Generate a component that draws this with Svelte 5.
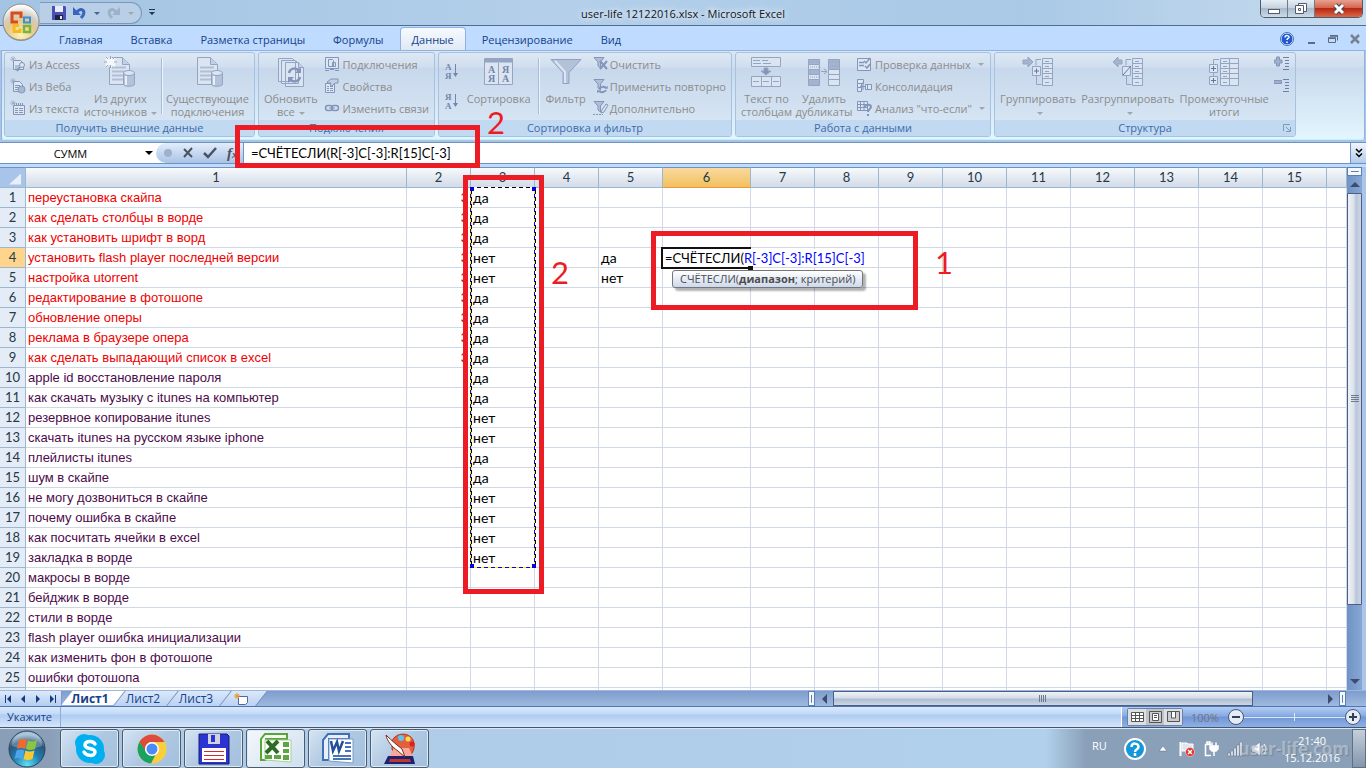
<script lang="ts">
	const menuTabs = ['Главная', 'Вставка', 'Разметка страницы', 'Формулы', 'Данные', 'Рецензирование', 'Вид'];
	let activeTab = $state('Данные');

	const queries = [
		'переустановка скайпа',
		'как сделать столбцы в ворде',
		'как установить шрифт в ворд',
		'установить flash player последней версии',
		'настройка utorrent',
		'редактирование в фотошопе',
		'обновление оперы',
		'реклама в браузере опера',
		'как сделать выпадающий список в excel',
		'apple id восстановление пароля',
		'как скачать музыку с itunes на компьютер',
		'резервное копирование itunes',
		'скачать itunes на русском языке iphone',
		'плейлисты itunes',
		'шум в скайпе',
		'не могу дозвониться в скайпе',
		'почему ошибка в скайпе',
		'как посчитать ячейки в excel',
		'закладка в ворде',
		'макросы в ворде',
		'бейджик в ворде',
		'стили в ворде',
		'flash player ошибка инициализации',
		'как изменить фон в фотошопе',
		'ошибки фотошопа'
	];

	const answers = [
		'да', 'да', 'да', 'нет', 'нет', 'да', 'да', 'да', 'да', 'да',
		'да', 'нет', 'нет', 'да', 'да', 'нет', 'нет', 'нет', 'нет'
	];

	const criteria: Record<number, string> = { 3: 'да', 4: 'нет' };
	const columns = Array.from({ length: 15 }, (_, i) => i + 1);
	const sheets = ['Лист1', 'Лист2', 'Лист3'];

	let activeSheet = $state('Лист1');
	let formula = $state('=СЧЁТЕСЛИ(R[-3]C[-3]:R[15]C[-3]');
	let zoom = $state(50);
</script>

{#snippet smallIcon(name: string)}
	<svg class="ico" viewBox="0 0 16 16" width="16" height="16" fill="#dde6f3" stroke="#8395b8">
		{#if name === 'access'}
			<path d="M3.5 4.5h7l3 3v6h-10z" />
			<path d="M0 3h6M3 0v6M1 1l4 4M5 1 1 5" stroke="#9aabc8" stroke-width=".7" />
			<path d="M5 10h4M5 12h3" />
			<circle cx="12" cy="9" r="2.5" />
			<path d="m10 11-3 4" stroke-width="2" />
		{:else if name === 'web'}
			<path d="M3.5 3.5h6l3 3v7h-9z" />
			<path d="M0 3h6M3 0v6M1 1l4 4M5 1 1 5" stroke="#9aabc8" stroke-width=".7" />
			<path d="M5 7.5h5M5 9.5h4M5 11.5h3" />
			<circle cx="11.5" cy="11.5" r="3.5" fill="#a9b8d1" />
		{:else if name === 'text'}
			<path d="M3.5 5.5h11v9h-11z" />
			<path d="M4 4.5h10" stroke-dasharray="1 1" stroke-width="3" />
			<path d="M0 3h6M3 0v6M1 1l4 4M5 1 1 5" stroke="#9aabc8" stroke-width=".7" />
			<path d="M5 8.5h3M9 8.5h4M5 10.5h3M9 10.5h4M5 12.5h3M9 12.5h4" />
		{:else if name === 'links'}
			<path d="M1.5 1.5h13v11h-13z" />
			<path d="M4.5 3.5h4l1 1v6h-5zM8.5 6.5h3v4h-3z" />
			<path d="M1 14.5h4M11 14.5h4M6 13.5h4" />
		{:else if name === 'props'}
			<path d="M1.5 5.5h9v9h-9z" />
			<path d="M3 8.5h2M6 8.5h3M3 10.5h2M6 10.5h3M3 12.5h2M6 12.5h3" />
			<path d="m3 4 4-3h7v4h-3l-3 3-2-1 1-2H4z" fill="#c2cee1" />
		{:else if name === 'chain'}
			<rect x="1.5" y="5.5" width="7" height="5" rx="2.5" fill="none" stroke-width="1.5" />
			<rect x="7.5" y="5.5" width="7" height="5" rx="2.5" fill="none" stroke-width="1.5" />
			<path d="M5 8h6" />
		{:else if name === 'clear' || name === 'reapply' || name === 'advanced'}
			<path d="M1 1.5h10L7.5 6v6L5 10V6z" fill="#b1bfd6" />
			{#if name === 'clear'}
				<path d="m7 5 7 8M14 5l-7 8" stroke-width="2" stroke="#8395b8" />
			{:else if name === 'reapply'}
				<path d="M6 11a4 3 0 0 1 7-1M13 12a4 3 0 0 1-7 1" fill="none" stroke-width="2" />
				<path d="m11 10 3.5 1L15 8zM8 13l-4-1v3z" fill="#8395b8" stroke="none" />
			{:else}
				<path d="m8 13 1-3 4-6 2 1-4 7z" />
				<path d="M0 14.5h10" stroke-dasharray="2 1" />
			{/if}
		{:else if name === 'validate'}
			<path d="M1.5 2.5h13v12h-13z" />
			<path d="M3 6.5h5M3 9.5h5" stroke-width="1.5" />
			<path d="m8 5 2 2 4-5M9 10l2 2 3-4" fill="none" stroke-width="1.5" />
		{:else if name === 'merge'}
			<path d="M1.5 1.5h6v4h-6zM1.5 5.5h4v8h-4zM9.5 6.5h6v5h-6z" />
			<path d="M2 9.5h3M7 4v8M4 8.5h6M11.5 7v4" />
		{:else if name === 'whatif'}
			<path d="M1.5 1.5h10v9h-10zM1 4.5h10M1 7.5h10M4.5 1v9M8 1v9" />
			<path d="M9 7c0-3 6-3 6 0 0 2-3 2-3 5M12 14v2" fill="none" stroke-width="2" />
		{:else if name === 'show' || name === 'hide'}
			<path d="M9 1.5h6M11 4.5h4M11 7.5h4M11 10.5h4M9 13.5h6" stroke="#6c7fa5" />
			<path d={name === 'show' ? 'M0 4h2.5V1h3v3H8v3H5.5v3h-3V7H0z' : 'M0 2.5h7.5v3H0z'} fill="#9fb0ca" />
		{/if}
	</svg>
{/snippet}

{#snippet bigIcon(name: string)}
	<svg class="ico" viewBox="0 0 32 32" width="32" height="32" fill="#dbe4f1" stroke="#94a5c4">
		{#if name === 'sources' || name === 'existing'}
			<path d="M5.5 1.5h13l7 7v20h-20z" />
			<path d="M18.5 1.5v7h7" fill="#c3cfe2" />
			<path d="M8 11.5h14M8 15.5h14M8 19.5h11M8 23.5h11" stroke="#b1bfd6" stroke-width="2" />
			<path d="M19.5 17v11c0 3 11 3 11 0V17z" fill="#b4c2d9" />
			<path d="M22 20v9" stroke="#e9eff7" stroke-width="2" />
			<ellipse cx="25" cy="17" rx="5.5" ry="2.5" />
			{#if name === 'sources'}
				<path d="M1 6h11M6.500 1v10M2 2l9 8M11 2l-9 8" stroke="#f5f8fc" stroke-width="2.500" />
				<path d="M0 6h3M10 6h3M6.500 0v3M2 1l2 2M11 1 9 3M2 11l2-2M6.500 9v3" />
			{/if}
		{:else if name === 'refresh'}
			<path d="M3.5 2.5h14l3 3v20h-17zM6.5 4.500h14l3 3v20h-17zM10.500 6.500h13l5 5v19h-18z" />
			<path d="M23.500 6.500v5h5" fill="#c3cfe2" />
			<path d="M14 17c1-5 7-6 10-2M25 21c-1 5-7 6-10 2" fill="none" stroke="#8395b8" stroke-width="2.500" />
			<path d="M20 17h6v-6zM19 21h-6v6z" fill="#8395b8" stroke="none" />
		{:else if name === 'sort'}
			<path d="M1.5 2.500h28v26h-28z" />
			<path d="M2 4.500h27" stroke-width="4" />
			<path d="M15.500 7v21" />
			<g class="az big-az" stroke="none" fill="#7385ab">
				<text x="5" y="17">А</text><text x="5" y="26">Я</text>
				<text x="19" y="17">Я</text><text x="19" y="26">А</text>
			</g>
		{:else if name === 'filter'}
			<path d="M1 3.500h30l-12 13v11h-6v-11z" fill="#b4c2d9" stroke="#8fa2c3" />
			<path d="m5 5 10 11v11" fill="none" stroke="#dce5f2" stroke-width="2" />
		{:else if name === 'columns'}
			<path d="M1.5 1.5h29v9h-29zM1.500 20.500h29v10h-29zM11.500 20v10M21.500 20v10" />
			<path d="M3 4.500h7M12 4.500h6M3 7.500h8M13 7.500h8M3 25.500h6M13 25.500h6M23 25.500h6" />
			<path d="M14 12h4v3h3l-5 4-5-4h3z" fill="#8395b8" />
		{:else if name === 'dupes'}
			<path d="M.5 3.500h11v5H.500zM.500 13.500h11v5H.500zM.500 23.500h11v6H.500zM20.500 3.500h11v10h-11z" fill="#a4b4ce" />
			<path d="M.5 8.500h11v5H.500zM.500 18.500h11v5H.500zM20.500 13.500h11v5h-11zM20.500 18.500h11v11h-11zM20 23.500h11" />
			<path d="M2 11h9M2 21h9M2 6h9M22 6h9M22 10h9" stroke-dasharray="1 1" />
			<path d="M13 15.500h5M16 13l3 2.500-3 2.500" fill="none" />
		{:else if name === 'group' || name === 'ungroup'}
			<path d="M20.5 2.500h10v27h-10zM20 7.500h10M20 12.500h10M20 17.500h10M20 22.500h10M23 5.500h4M23 10.500h4M23 15.500h4M23 20.500h4M23 26.500h4" />
			<path d="M19 3.500h-5v6M14.500 20v8.500h5" fill="none" />
			<path d="M10.5 10.500h8v9h-8z" />
			{#if name === 'group'}
				<path d="M12 15h5M14.500 12.500v5" stroke="#62759c" />
				<path d="M1 4h5V1l5 5-5 5V8H1z" fill="#a4b4ce" />
			{:else}
				<path d="m11 19 8-9" stroke="#62759c" />
				<path d="M10 4H6V1L1 6l5 5V8h4z" fill="#a4b4ce" />
			{/if}
		{:else if name === 'subtotal'}
			<path d="M12.500 2.500h18v27h-18zM21.500 2v27M12 7.500h18M12 12.500h18M12 17.500h18M12 22.500h18M15 5.500h4M15 10.500h4M15 15.500h4M15 20.500h4M15 26.500h4" />
			<path d="M11 3.500H5.500v23" fill="none" />
			<path d="M1.500 8.500h8v8h-8zM1.500 20.500h8v8h-8z" />
			<path d="M3 12.500h5M5.500 10v5M3 24.500h5M5.500 22v5" stroke="#62759c" />
		{/if}
	</svg>
{/snippet}

{#snippet small(icon: string, label: string, arrow = false)}
	<button class="small">
		{@render smallIcon(icon)}
		<span>{label}</span>
		{#if arrow}<i class="caret"></i>{/if}
	</button>
{/snippet}

{#snippet big(icon: string, first: string, second = '', arrow = false)}
	<button class="big">
		{@render bigIcon(icon)}
		<span>{first}</span>
		<span>{second}{#if arrow}<i class="caret"></i>{/if}</span>
	</button>
{/snippet}

<div class="screen">
	<header class="titlebar">
		<div class="title-left">
			<div class="quick">
				<button aria-label="Сохранить">
					<svg width="14" height="14" viewBox="0 0 14 14"><path d="M0 0h13l1 1v13H0z" fill="#4a4fb5" /><path d="M3 0h8v6H3z" fill="#e7edfa" /><path d="M3 9h8v5H3z" fill="#20233f" /><path d="M8 10h2v3H8z" fill="#e7edfa" /></svg>
				</button>
				<button aria-label="Отменить">
					<svg width="14" height="14" viewBox="0 0 14 14"><path d="M4 6c5-6 10 0 4 6" fill="none" stroke="#3765c0" stroke-width="3" /><path d="M0 1v8h8z" fill="#3765c0" /></svg>
				</button>
				<i class="caret dark"></i>
				<button aria-label="Вернуть">
					<svg width="14" height="14" viewBox="0 0 14 14"><path d="M9 6C4 0-1 6 5 12" fill="none" stroke="#9eb1ca" stroke-width="3" /><path d="M13 1v8H5z" fill="#9eb1ca" /></svg>
				</button>
				<i class="caret"></i>
			</div>
			<button class="more" aria-label="Настройка панели">
				<svg width="6" height="6" viewBox="0 0 6 6"><path d="M0 0h6v1H0zM0 3h6L3 6z" fill="#1d3556" /></svg>
			</button>
		</div>
		<h1>user-life 12122016.xlsx - Microsoft Excel</h1>
		<div class="window-buttons">
			<button aria-label="Свернуть"><svg width="14" height="12" viewBox="0 0 14 12"><rect x="1.5" y="6.5" width="11" height="4" fill="#fff" stroke="#545b6d" /></svg></button>
			<button aria-label="Восстановить"><svg width="14" height="12" viewBox="0 0 14 12"><path d="M4.5.5h8v8h-8z" fill="#fff" stroke="#545b6d" /><path d="M1.5 2.5h8v8h-8zM4.5 5.5h2v2h-2z" fill="#fff" stroke="#545b6d" /></svg></button>
			<button class="close" aria-label="Закрыть"><svg width="14" height="12" viewBox="0 0 14 12"><path d="m3 2 8 8M11 2l-8 8" stroke="#4b4652" stroke-width="5" /><path d="m3 2 8 8M11 2l-8 8" stroke="#fff" stroke-width="3" /></svg></button>
		</div>
	</header>

	<button class="office" aria-label="Office">
		<svg width="40" height="40" viewBox="0 0 40 40">
			<defs>
				<radialGradient id="orb" cx="50%" cy="85%" r="80%">
					<stop offset="0" stop-color="#fff3b8" />
					<stop offset=".5" stop-color="#e3c88c" />
					<stop offset=".7" stop-color="#d1ccc4" />
					<stop offset="1" stop-color="#fff" />
				</radialGradient>
			</defs>
			<circle cx="20" cy="21" r="18" fill="#6f6a60" opacity=".6" />
			<circle cx="20" cy="20" r="18" fill="url(#orb)" stroke="#918b7e" />
			<g fill="none" stroke-width="3">
				<path d="M17 20h-6v-9h9v5" stroke="#dc4a18" />
				<path d="M23 15.5h6v5h-6z" stroke="#3a8fd8" stroke-width="2" />
				<path d="M18 23.5h-5v6h6v-3" stroke="#f5b921" />
				<path d="M23 24h6v6h-6z" stroke="#7bb33c" stroke-width="2.5" />
			</g>
		</svg>
	</button>

	<nav class="menu">
		{#each menuTabs as tab}
			<button class:active={tab === activeTab} onclick={() => (activeTab = tab)}>{tab}</button>
		{/each}
		<div class="doc-buttons">
			<button aria-label="Справка">
				<svg width="14" height="14" viewBox="0 0 14 14"><circle cx="7" cy="7" r="6" fill="#2158d0" stroke="#f0f5ff" /><circle cx="7" cy="7" r="6.5" fill="none" stroke="#4973b8" /><path d="M5 5.5c0-3 4.500-2 4 0-.5 1-2 1-2 2.500M7 9.500v1.500" fill="none" stroke="#fff" stroke-width="1.5" /></svg>
			</button>
			<button aria-label="Свернуть книгу"><svg width="10" height="10" viewBox="0 0 10 10"><path d="M2 9h7" stroke="#5f6b80" stroke-width="2" /></svg></button>
			<button aria-label="Восстановить книгу"><svg width="10" height="10" viewBox="0 0 10 10"><path d="M.5 4.5h7v4h-7zM2 1.5h7.500v5" fill="none" stroke="#5f6b80" /><path d="M0 4h8M2 2h8" stroke="#5f6b80" stroke-width="1.5" /></svg></button>
			<button aria-label="Закрыть книгу"><svg width="10" height="10" viewBox="0 0 10 10"><path d="m1 1 8 8M9 1 1 9" stroke="#77808f" stroke-width="2.5" /></svg></button>
		</div>
	</nav>

	<div class="ribbon-wrap">
		<div class="ribbon">
			<section class="group external">
				<div class="tools">
					<div class="stack">
						{@render small('access', 'Из Access')}
						{@render small('web', 'Из Веба')}
						{@render small('text', 'Из текста')}
					</div>
					{@render big('sources', 'Из других', 'источников', true)}
					<hr />
					{@render big('existing', 'Существующие', 'подключения')}
				</div>
				<h2>Получить внешние данные</h2>
			</section>
			<section class="group connections">
				<div class="tools">
					{@render big('refresh', 'Обновить', 'все', true)}
					<div class="stack">
						{@render small('links', 'Подключения')}
						{@render small('props', 'Свойства')}
						{@render small('chain', 'Изменить связи')}
					</div>
				</div>
				<h2>Подключения</h2>
			</section>
			<section class="group sorting">
				<div class="tools">
					<div class="stack az-buttons">
						{#each ['АЯ', 'ЯА'] as pair}
							<button aria-label={pair === 'АЯ' ? 'По возрастанию' : 'По убыванию'}>
								<svg class="az" width="16" height="18" viewBox="0 0 16 18" fill="#7385ab">
									<text x="1" y="8">{pair[0]}</text>
									<text x="1" y="17">{pair[1]}</text>
									<path d="M11 2h1v9h2l-2.500 4L9 11h2z" />
								</svg>
							</button>
						{/each}
					</div>
					{@render big('sort', 'Сортировка')}
					<hr />
					{@render big('filter', 'Фильтр')}
					<div class="stack">
						{@render small('clear', 'Очистить')}
						{@render small('reapply', 'Применить повторно')}
						{@render small('advanced', 'Дополнительно')}
					</div>
				</div>
				<h2>Сортировка и фильтр</h2>
			</section>
			<section class="group data-tools">
				<div class="tools">
					{@render big('columns', 'Текст по', 'столбцам')}
					{@render big('dupes', 'Удалить', 'дубликаты')}
					<div class="stack">
						{@render small('validate', 'Проверка данных', true)}
						{@render small('merge', 'Консолидация')}
						{@render small('whatif', 'Анализ "что-если"', true)}
					</div>
				</div>
				<h2>Работа с данными</h2>
			</section>
			<section class="group outline">
				<div class="tools">
					{@render big('group', 'Группировать', '', true)}
					{@render big('ungroup', 'Разгруппировать', '', true)}
					{@render big('subtotal', 'Промежуточные', 'итоги')}
					<div class="stack">
						<button class="small" aria-label="Отобразить детали">{@render smallIcon('show')}</button>
						<button class="small" aria-label="Скрыть детали">{@render smallIcon('hide')}</button>
					</div>
				</div>
				<h2>Структура</h2>
				<svg class="launcher" width="8" height="8" viewBox="0 0 8 8"><path d="M.5 7V.5H7M3 3l4 4M7.5 3v4.500H3" fill="none" stroke="#7f98bf" /></svg>
			</section>
		</div>
	</div>

	<div class="formula-bar">
		<div class="name-box">
			<input aria-label="Имя" value="СУММ" />
			<i class="caret black"></i>
		</div>
		<div class="fx">
			<i class="dot"></i>
			<button aria-label="Отмена"><svg width="12" height="12" viewBox="0 0 12 12"><path d="m2 2 8 8M10 1 2 10" stroke="#4b5361" stroke-width="2" /></svg></button>
			<button aria-label="Ввод"><svg width="14" height="12" viewBox="0 0 14 12"><path d="m1 6 4 4 8-9" fill="none" stroke="#4b5361" stroke-width="2.5" /></svg></button>
			<button class="fn" aria-label="Вставить функцию">f<small>x</small></button>
		</div>
		<input class="formula" aria-label="Строка формул" bind:value={formula} />
		<button class="expand" aria-label="Развернуть"><svg width="8" height="10" viewBox="0 0 8 10"><path d="m1 1 3 3 3-3M1 5.5l3 3 3-3" fill="none" stroke="#000" stroke-width="1.5" /></svg></button>
	</div>

	<div class="sheet-area">
		<div class="sheet">
			<table>
				<colgroup>
					<col class="c-head" />
					<col class="c-text" />
					{#each columns.slice(1) as n}
						<col class={n === 6 ? 'c-wide' : 'c-std'} />
					{/each}
					<col />
				</colgroup>
				<thead>
					<tr>
						<th class="corner"><i></i></th>
						{#each columns as n}
							<th class:current={n === 6}>{n}</th>
						{/each}
						<th></th>
					</tr>
				</thead>
				<tbody>
					{#each queries as query, r}
						<tr>
							<th class:current={r === 3}>{r + 1}</th>
							<td class="query" class:hot={r < 9}>{query}</td>
							<td class="count">{r < 9 ? '3' : ''}</td>
							<td class="answer">{answers[r] ?? ''}</td>
							<td></td>
							<td>{criteria[r] ?? ''}</td>
							<td>
								{#if r === 3}
									<div class="editor"><span class="edit-text">=СЧЁТЕСЛИ(<b>R[-3]C[-3]:R[15]C[-3]</b></span></div>
								{/if}
							</td>
							{#each columns.slice(6) as _}
								<td></td>
							{/each}
							<td></td>
						</tr>
					{/each}
					<tr class="rest">
						<th></th>
						{#each columns as _}<td></td>{/each}
						<td></td>
					</tr>
				</tbody>
			</table>
			<div class="marquee"><i></i><i></i><i></i><i></i></div>
			<div class="hint">СЧЁТЕСЛИ(<b>диапазон</b>; критерий)</div>
		</div>
		<div class="vscroll">
			<i class="split"></i>
			<button aria-label="Вверх"><i class="up"></i></button>
			<div class="vthumb"><i class="grip"></i></div>
			<div class="vtrack"></div>
			<button aria-label="Вниз"><i class="down"></i></button>
		</div>
	</div>

	<div class="sheet-bar">
		<div class="sheet-nav">
			<button aria-label="Первый лист"><svg width="8" height="8" viewBox="0 0 8 8"><path d="M1 0h1v8H1zM7 0v8L3 4z" /></svg></button>
			<button aria-label="Предыдущий лист"><svg width="8" height="8" viewBox="0 0 8 8"><path d="M6 0v8L2 4z" /></svg></button>
			<button aria-label="Следующий лист"><svg width="8" height="8" viewBox="0 0 8 8"><path d="M2 0v8l4-4z" /></svg></button>
			<button aria-label="Последний лист"><svg width="8" height="8" viewBox="0 0 8 8"><path d="M6 0h1v8H6zM1 0v8l4-4z" /></svg></button>
		</div>
		<div class="sheet-tabs">
			{#each sheets as sheet}
				<button class:active={sheet === activeSheet} onclick={() => (activeSheet = sheet)}>{sheet}</button>
			{/each}
			<button class="new" aria-label="Вставить лист">
				<svg width="14" height="12" viewBox="0 0 14 12"><path d="M4.5 3.5h9v6l-2 2h-7z" fill="#fff" stroke="#51699a" /><path d="M0 3h6M3 0v6M1 1l4 4M5 1 1 5" stroke="#e89b1c" /></svg>
			</button>
		</div>
		<div class="hscroll">
			<i class="split"></i>
			<button aria-label="Влево"><i class="left"></i></button>
			<div class="hthumb"><i class="grip"></i></div>
			<div class="htrack"></div>
			<button aria-label="Вправо"><i class="right"></i></button>
			<i class="split"></i>
		</div>
	</div>

	<footer class="status">
		<span class="mode">Укажите</span>
		<div class="view">
			<div class="view-buttons">
				<button aria-label="Обычный"><svg width="13" height="10" viewBox="0 0 13 10"><path d="M.5.5h12v9H.5zM0 3.5h13M0 6.5h13M4.5 0v10M8.5 0v10" fill="#fff" stroke="#555" /></svg></button>
				<button class="on" aria-label="Разметка страницы"><svg width="13" height="12" viewBox="0 0 13 12"><path d="M.5.5h12v11H.5z" fill="#c9cdd2" stroke="#555" /><path d="M3.5 2.5h6v7h-6zM5 4.5h3M5 6.5h3" fill="#fff" stroke="#555" /></svg></button>
				<button aria-label="Страничный"><svg width="13" height="12" viewBox="0 0 13 12"><path d="M.5.5h12v10H.5z" fill="#c9cdd2" stroke="#555" /><path d="M4.5 1v6h4V1" fill="#fff" stroke="#555" /></svg></button>
			</div>
			<span class="percent">100%</span>
			<button class="round" aria-label="Мельче"><svg width="16" height="16" viewBox="0 0 16 16"><circle cx="8" cy="8" r="7.5" fill="#e5ebf4" stroke="#46597c" /><path d="M4 8h8" stroke="#333f55" stroke-width="2" /></svg></button>
			<input type="range" aria-label="Масштаб" bind:value={zoom} />
			<button class="round" aria-label="Крупнее"><svg width="16" height="16" viewBox="0 0 16 16"><circle cx="8" cy="8" r="7.5" fill="#e5ebf4" stroke="#46597c" /><path d="M4 8h8M8 4v8" stroke="#333f55" stroke-width="2" /></svg></button>
		</div>
	</footer>

	<div class="taskbar">
		<button class="start" aria-label="Пуск">
			<svg width="38" height="38" viewBox="0 0 38 38">
				<defs>
					<radialGradient id="start" cx="50%" cy="95%" r="85%">
						<stop offset="0" stop-color="#5fe2f5" />
						<stop offset=".45" stop-color="#1f7fb4" />
						<stop offset=".8" stop-color="#2b5679" />
						<stop offset="1" stop-color="#8fb3cb" />
					</radialGradient>
				</defs>
				<circle cx="19" cy="19" r="18" fill="url(#start)" stroke="#29475f" />
				<path d="M4 16a15 14 0 0 1 30 0q-15 5-30 0" fill="#fff" opacity=".25" />
				<path d="M11 10q4-2 8 0l-2 9q-4-2-8 0z" fill="#ee6a2f" />
				<path d="M20 10.500q4 2 9 0l-2 8.500q-5 2-9 0z" fill="#8cc63e" />
				<path d="M8.500 20.500q4-2 8 0l-2 8.500q-4-2-8 0z" fill="#4ba5e8" />
				<path d="M17.500 20.500q4 2 9 0l-2 8.500q-5 2-9 0z" fill="#fbc92f" />
			</svg>
		</button>
		<button class="task" aria-label="Skype">
			<svg width="32" height="32" viewBox="0 0 32 32"><circle cx="10" cy="10" r="9" fill="#00aff0" /><circle cx="22" cy="22" r="9" fill="#00aff0" /><circle cx="16" cy="16" r="14" fill="#00aff0" /><path d="M21 11c-2-4-10-3-10 1 0 5 10 2 10 7 0 5-9 4-11 0" fill="none" stroke="#fff" stroke-width="3.5" stroke-linecap="round" /></svg>
		</button>
		<button class="task" aria-label="Chrome">
			<svg width="32" height="32" viewBox="0 0 32 32"><circle cx="16" cy="16" r="14.5" fill="#fbcf3a" /><path d="M3.5 8.700A14.500 14.500 0 0 1 28.600 9H16a7 7 0 0 0-6.500 9.500z" fill="#dd4b3e" /><path d="M3.500 8.700A14.500 14.500 0 0 0 15 30.500l6-11.500a7 7 0 0 1-11-.5z" fill="#1aa260" /><circle cx="16" cy="16" r="7" fill="#fff" /><circle cx="16" cy="16" r="5.5" fill="#4c8bf5" /></svg>
		</button>
		<button class="task" aria-label="Total Commander">
			<svg width="32" height="32" viewBox="0 0 32 32"><path d="M1 1h28l2 2v28H1z" fill="#2b33d0" stroke="#1a1d78" /><path d="M10 1h12v10H10z" fill="#cfd3df" /><path d="M13 2h4v7h-4z" fill="#2b33d0" /><path d="M4 15h24v14H4z" fill="#fff" /><path d="M6 18.500h20M6 22.500h20M6 26.500h20" stroke="#d9262c" /></svg>
		</button>
		<button class="task lit" aria-label="Excel">
			<svg width="32" height="32" viewBox="0 0 32 32"><path d="M5 1h22v5H6v21H1V6z" fill="#f6fbf1" stroke="#58a63a" stroke-width="2" /><path d="M5 7h26v22l-26-2z" fill="#fff" stroke="#a9cf97" /><path d="M23 9h6v5h-6zM23 16h6v4h-6zM5 22h7v4H5zM14 22h7v4h-7zM23 22h6v5h-6z" fill="#5da645" /><path d="m7 8 11 12M18 8 6 20" stroke="#2c6d25" stroke-width="4" /></svg>
		</button>
		<button class="task" aria-label="Word">
			<svg width="32" height="32" viewBox="0 0 32 32"><path d="M6 1h21v5H7v21H1V7z" fill="#e6effa" stroke="#3f6fb5" stroke-width="2" /><path d="M7 6h24v24L7 28z" fill="#fff" stroke="#7d9cc9" /><path d="M23 10h6M23 14h6M23 18h6M11 23h18M11 26h18" stroke="#4674b8" stroke-width="2" /><path d="m9 8 2 10 4-9 2 9 4-10" fill="none" stroke="#244e97" stroke-width="2.500" /></svg>
		</button>
		<button class="task" aria-label="Paint">
			<svg width="32" height="32" viewBox="0 0 32 32"><path d="M8 8c4-9 17-9 21-1 3 7 0 14-5 17H11l-3-8z" fill="#e2603f" stroke="#b03722" /><circle cx="17" cy="5" r="3" fill="#5bc6ef" /><circle cx="24" cy="6" r="2.5" fill="#ffe249" /><circle cx="28" cy="11" r="2.5" fill="#e21d23" /><path d="m5 24 5-9h15l4 9z" fill="#f9a79b" /><path d="M4 23h25l2 8H0z" fill="#1b2370" /><path d="M6 26h20l1 3H5z" fill="#c2352f" /><path d="M2 2c1 6 6 12 12 16l7 6-3-8C13 12 8 8 2 2z" fill="#fff" stroke="#7b2a1c" /></svg>
		</button>

		<div class="tray">
			<span class="lang">RU</span>
			<svg class="help" width="22" height="22" viewBox="0 0 22 22"><circle cx="11" cy="11" r="10" fill="#1396dc" stroke="#fff" stroke-width="2" /><path d="M7.500 9c0-5 7-4 7 0 0 2.500-3.500 2-3.500 5M11 15v3" fill="none" stroke="#fff" stroke-width="2.5" /></svg>
			<svg class="arrow" width="8" height="6" viewBox="0 0 8 6"><path d="m0 5 4-5 4 5z" fill="#fff" stroke="#5a6b80" stroke-width=".5" /></svg>
			<svg width="16" height="16" viewBox="0 0 16 16"><path d="M1.500 1v14" stroke="#fff" stroke-width="2" /><path d="M3 2h5l1 1h5v7H3z" fill="#dfe6ee" stroke="#fff" /><circle cx="11" cy="11" r="4.5" fill="#e0322c" stroke="#fff" stroke-width=".5" /><path d="m9 9 4 4M13 9l-4 4" stroke="#fff" stroke-width="1.5" /></svg>
			<svg width="16" height="16" viewBox="0 0 16 16"><path d="M8 14.500H2.500v-11H8M4 1h3v2H4z" fill="none" stroke="#fff" stroke-width="1.5" /><path d="M7 5h8v3l-2 2H9L7 8zM9 1.500V5M13 1.500V5M11 10v5" fill="#fff" stroke="#fff" stroke-width="1.5" /></svg>
			<svg width="16" height="16" viewBox="0 0 16 16"><path d="M1 12h2v3H1zM4 10h2v5H4zM7 7h2v8H7zM10 4h2v11h-2zM13 1h2v14h-2z" fill="#fff" stroke="#5a6b80" stroke-width=".5" /></svg>
			<svg width="16" height="16" viewBox="0 0 16 16"><path d="M1 5h3l5-4v14l-5-4H1z" fill="#fff" stroke="#5a6b80" stroke-width=".5" /><path d="M11 5q2 3 0 6M13 3q4 5 0 10" fill="none" stroke="#fff" /></svg>
			<div class="clock">
				<span class="watermark">user-life.com</span>
				<time>21:40</time>
				<time>15.12.2016</time>
			</div>
		</div>
		<button class="peek" aria-label="Показать рабочий стол"></button>
	</div>

	<div class="mark mark-formula"></div>
	<div class="mark mark-range"></div>
	<div class="mark mark-cell"></div>
	<span class="num num-formula">2</span>
	<span class="num num-range">2</span>
	<span class="num num-cell">1</span>
</div>

<style>
	:global(body) {
		margin: 0;
		overflow: hidden;
	}

	.screen {
		--ui: 'Open Sans', 'Noto Sans', sans-serif;
		--red: #ed1c24;
		position: relative;
		display: flex;
		flex-direction: column;
		height: 100vh;
		overflow: hidden;
		background: #bfdbff;
		font-family: var(--ui);
		font-size: 11px;
		color: #15428b;
	}

	.screen * {
		box-sizing: border-box;
	}

	button,
	input {
		font: inherit;
		color: inherit;
		padding: 0;
		margin: 0;
		border: 0;
		background: none;
	}

	svg {
		display: block;
		flex-shrink: 0;
	}

	h1,
	h2,
	hr {
		margin: 0;
		font-weight: normal;
	}

	.caret {
		display: inline-block;
		border: 3px solid transparent;
		border-top-color: #a0a6b0;
		border-bottom: 0;
		margin-left: 4px;
		vertical-align: middle;
	}

	.caret.dark { border-top-color: #44659a; }
	.caret.black { border: 4px solid transparent; border-top-color: #000; border-bottom: 0; }

	/* title bar */
	.titlebar {
		display: grid;
		grid-template-columns: 1fr auto 1fr;
		align-items: start;
		height: 26px;
		flex-shrink: 0;
		border-bottom: 1px solid #4f6d8f;
		background: linear-gradient(90deg, #a2c4e2, #b3cfea 40%, #a9c9e6 75%, #c8dcef);
	}

	.title-left {
		display: flex;
		padding-left: 40px;
	}

	.quick {
		display: flex;
		align-items: center;
		gap: 7px;
		width: 102px;
		height: 22px;
		margin-top: 2px;
		padding-left: 12px;
		border: 1px solid #7e97b6;
		border-left: 0;
		border-radius: 0 11px 11px 0;
		background: #b9cfe8;
	}

	.quick .caret { margin: 0; }

	.more {
		display: flex;
		align-items: center;
		justify-content: center;
		width: 20px;
		height: 24px;
	}

	h1 {
		font-size: 11px;
		line-height: 27px;
		color: #10151c;
		text-shadow: 0 0 6px #fff, 0 0 10px #fff;
	}

	.window-buttons {
		display: flex;
		justify-self: end;
		height: 18px;
		margin-right: 3px;
		border: 1px solid #4e5b6c;
		border-top: 0;
		border-radius: 0 0 5px 5px;
		overflow: hidden;
	}

	.window-buttons button {
		display: flex;
		justify-content: center;
		align-items: center;
		width: 27px;
		border-right: 1px solid #6e7c8e;
		background: linear-gradient(#e6eef6, #c3d0de 50%, #a9bacd 50%, #cbdbe9);
	}

	.window-buttons .close {
		width: 47px;
		border: 0;
		background: linear-gradient(#e9a18f, #d36650 45%, #b8270e 50%, #d9694c);
	}

	.office {
		position: absolute;
		top: 2px;
		left: 1px;
		z-index: 2;
	}

	/* menu */
	.menu {
		display: flex;
		height: 24px;
		flex-shrink: 0;
		padding: 1px 6px 0 45px;
		background: #bfdbff;
	}

	.menu > button {
		padding: 0 11px;
		margin: 0 2px;
		border: 1px solid transparent;
		border-bottom: 0;
		border-radius: 4px 4px 0 0;
		white-space: nowrap;
	}

	.menu > button.active {
		border-color: #8db2e3;
		background: linear-gradient(#f6faff, #dfe9f5);
	}

	.doc-buttons {
		display: flex;
		align-items: center;
		gap: 12px;
		margin-left: auto;
	}

	/* ribbon */
	.ribbon-wrap {
		height: 92px;
		flex-shrink: 0;
		padding: 0 1px 2px;
		background: #a9c4e6;
	}

	.ribbon {
		display: flex;
		gap: 3px;
		height: 90px;
		padding: 1px 2px 2px;
		border: 1px solid #8db2e3;
		border-bottom-color: #bff3fb;
		border-radius: 0 0 3px 3px;
		background: linear-gradient(#dbe6f4, #cfdded 16px, #c9d9ed 17px, #e3f5fe);
	}

	.group {
		position: relative;
		display: flex;
		flex-direction: column;
		flex-shrink: 0;
		border: 1px solid #a5c3e0;
		border-radius: 3px;
		background: linear-gradient(#dde8f4, #d1deee 14px, #c8d8ec 15px, #dae8f5);
		overflow: hidden;
	}

	.external { width: 251px; }
	.connections { width: 177px; }
	.sorting { width: 294px; }
	.data-tools { width: 256px; }
	.outline { width: 302px; }

	.tools {
		display: flex;
		flex: 1;
		min-height: 0;
		justify-content: space-between;
		padding: 0 5px;
		color: #8c8c8c;
	}

	.tools hr {
		width: 1px;
		height: 56px;
		margin-top: 5px;
		border: 0;
		background: #a6bdd9;
		box-shadow: 1px 0 #eef4fb;
	}

	.group h2 {
		height: 16px;
		flex-shrink: 0;
		font-size: 11px;
		line-height: 16px;
		text-align: center;
		color: #3e6aaa;
		background: #c1d9f1;
	}

	.stack {
		display: flex;
		flex-direction: column;
	}

	.small {
		display: flex;
		align-items: center;
		gap: 3px;
		height: 22px;
		white-space: nowrap;
	}

	.sorting .small { gap: 1px; }

	.big {
		display: flex;
		flex-direction: column;
		align-items: center;
		padding-top: 3px;
		line-height: 13px;
		white-space: nowrap;
	}

	.big svg { margin-bottom: 4px; }

	.az {
		font-family: 'Liberation Serif', serif;
		font-size: 9px;
		font-weight: bold;
	}

	.big-az { font-size: 10px; }

	.az-buttons button {
		height: 30px;
		padding-top: 6px;
	}

	.launcher {
		position: absolute;
		right: 4px;
		bottom: 4px;
	}

	/* formula bar */
	.formula-bar {
		display: flex;
		height: 22px;
		flex-shrink: 0;
		margin-bottom: 3px;
		border: 1px solid #6f93bd;
		border-width: 1px 0;
		background: #fff;
		color: #000;
	}

	.name-box {
		display: flex;
		align-items: center;
		width: 156px;
		padding-right: 3px;
	}

	.name-box input {
		flex: 1;
		min-width: 0;
		text-align: center;
	}

	.fx {
		display: flex;
		align-items: center;
		justify-content: space-between;
		width: 88px;
		padding: 0 6px 0 8px;
		border-right: 1px solid #6f93bd;
		background: linear-gradient(#e2edfb, #aac3e6);
		border-radius: 10px 0 0 10px;
	}

	.fx .dot {
		width: 8px;
		height: 8px;
		border-radius: 50%;
		background: #9fb1cb;
	}

	.fn {
		font: italic bold 15px 'Liberation Serif', serif;
		color: #4b5361;
	}

	.fn small { font-size: 10px; }

	.formula {
		flex: 1;
		min-width: 0;
		padding: 0 7px;
		font-family: Lato, var(--ui);
		font-size: 13px;
	}

	.expand {
		display: flex;
		align-items: center;
		justify-content: center;
		width: 16px;
		border-left: 1px solid #6f93bd;
		background: linear-gradient(#f0f6fd, #b2cbec);
	}

	/* sheet */
	.sheet-area {
		display: flex;
		flex: 1;
		min-height: 0;
		padding-right: 4px;
		background: #abc5ea;
	}

	.sheet {
		position: relative;
		flex: 1;
		min-width: 0;
		overflow: hidden;
		background: #fff;
	}

	table {
		width: 100%;
		table-layout: fixed;
		border-spacing: 0;
		font-family: Lato, var(--ui);
		font-size: 14px;
		color: #000;
	}

	.c-head { width: 26px; }
	.c-text { width: 381px; }
	.c-std { width: 64px; }
	.c-wide { width: 88px; }

	th,
	td {
		height: 20px;
		padding: 0 2px;
		line-height: 19px;
		text-align: left;
		white-space: nowrap;
		border-right: 1px solid #d0d7e5;
		border-bottom: 1px solid #d0d7e5;
	}

	th {
		padding: 0;
		font-size: 13px;
		font-weight: normal;
		text-align: center;
		color: #273846;
		background: #e4ecf7;
		border-color: #9eb6ce;
	}

	thead th {
		height: 21px;
		border-top: 1px solid #6f93bd;
		background: linear-gradient(#f8fbfd, #e4eaf2 50%, #d3dbe9);
	}

	thead th.current {
		background: linear-gradient(#f9d99f, #f1c15f);
		border-bottom-color: #f29536;
	}

	tbody th.current { background: #ffd58d; }

	thead th.corner { background: #a9c4e9; }

	.corner i {
		display: block;
		width: 12px;
		height: 11px;
		margin: 3px 4px 0 auto;
		background: #e8eff9;
		clip-path: polygon(100% 0, 100% 100%, 0 100%);
	}

	.query,
	.count {
		font-family: 'Liberation Sans', Arial, sans-serif;
		font-size: 13px;
		color: #4c0a4c;
	}

	.query.hot { color: #f00000; }

	.count {
		text-align: right;
		color: #7a0a0a;
	}

	.editor {
		position: relative;
		width: 90px;
		height: 22px;
		margin: -2px 0 -2px -4px;
		border: 2px solid #111;
		border-right: 0;
	}

	.editor::after {
		content: '';
		position: absolute;
		right: -2px;
		bottom: -3px;
		width: 5px;
		height: 4px;
		background: #111;
	}

	.edit-text {
		position: absolute;
		top: 0;
		left: 0;
		width: 214px;
		height: 18px;
		padding-left: 2px;
		font-size: 13px;
		background: #fff;
	}

	.edit-text b {
		font-weight: normal;
		color: #0000ff;
	}

	/* marching ants round the picked range */
	.marquee {
		position: absolute;
		top: 20px;
		left: 470px;
		width: 66px;
		height: 381px;
		background:
			repeating-linear-gradient(90deg, #000 0 4px, #fff 4px 7px) 0 0 / 100% 1px no-repeat,
			repeating-linear-gradient(90deg, #0000ff 0 4px, #ffee00 4px 7px) 0 100% / 100% 1px no-repeat,
			repeating-linear-gradient(#0000ff 0 4px, #ffee00 4px 7px) 0 0 / 1px 100% no-repeat,
			repeating-linear-gradient(#ffee00 0 3px, #000 3px 7px) 1px 0 / 1px 100% no-repeat,
			repeating-linear-gradient(#0000ff 0 4px, #ffee00 4px 7px) 64px 0 / 1px 100% no-repeat,
			repeating-linear-gradient(#ffffff 0 3px, #000 3px 7px) 65px 0 / 1px 100% no-repeat;
	}

	.marquee i {
		position: absolute;
		width: 4px;
		height: 4px;
		background: #0000e0;
	}

	.marquee i:nth-child(1) { top: 0; left: 0; }
	.marquee i:nth-child(2) { top: 0; right: 0; }
	.marquee i:nth-child(3) { bottom: 0; left: 0; }
	.marquee i:nth-child(4) { bottom: 0; right: 0; }

	.hint {
		position: absolute;
		top: 103px;
		left: 672px;
		height: 18px;
		padding: 0 7px;
		border: 1px solid #767676;
		border-radius: 3px;
		font-size: 11px;
		line-height: 15px;
		color: #4c4c4c;
		background: linear-gradient(#fff, #cdd9ee);
		box-shadow: 3px 3px 2px rgba(0, 0, 0, 0.3);
	}

	/* scroll bars */
	.vscroll {
		display: flex;
		flex-direction: column;
		width: 15px;
		background: linear-gradient(90deg, #6f93c6, #88a6d3);
	}

	.split {
		display: block;
		flex-shrink: 0;
		border: 1px solid #5b7fb3;
		background: linear-gradient(#5b7fb3, #5b7fb3) center / 60% 1px no-repeat #f4f8fd;
	}

	.vscroll .split { height: 9px; }

	.vscroll button {
		display: flex;
		align-items: center;
		justify-content: center;
		height: 17px;
	}

	.up,
	.down,
	.left,
	.right {
		display: block;
		border: 5px solid transparent;
	}

	.up { border-top: 0; border-bottom-color: #3d4c6e; }
	.down { border-bottom: 0; border-top-color: #3d4c6e; }
	.left { border-left: 0; border-right-color: #3d4c6e; }
	.right { border-right: 0; border-left-color: #3d4c6e; }

	.vthumb {
		display: flex;
		align-items: center;
		justify-content: center;
		flex: 412;
		border: 1px solid #4a5f85;
		border-radius: 1px;
		background: linear-gradient(90deg, #eef2f7, #dbe2eb 45%, #b9c6d8 60%, #cdd7e4);
	}

	.vtrack { flex: 68; }

	.vthumb .grip {
		width: 8px;
		height: 8px;
		background: repeating-linear-gradient(#6c7a90 0 1px, transparent 1px 2px);
	}

	.sheet-bar {
		display: flex;
		height: 17px;
		flex-shrink: 0;
		padding-right: 20px;
		border-top: 1px solid #9bb7dd;
		border-bottom: 1px solid #4d75b3;
		background: linear-gradient(#7e9dcd, #9fb9df);
	}

	.sheet-nav {
		display: flex;
		align-items: center;
		justify-content: space-around;
		width: 62px;
		border-right: 1px solid #7b9acb;
		fill: #163a7d;
		background: linear-gradient(#dce9fb, #b4cdf0);
	}

	.sheet-tabs {
		display: flex;
		flex: 1;
	}

	.sheet-tabs button {
		position: relative;
		z-index: 0;
		width: 53px;
		padding-left: 3px;
		font-size: 12px;
		line-height: 15px;
	}

	.sheet-tabs button::before {
		content: '';
		position: absolute;
		inset: 0 -5px 0 5px;
		z-index: -1;
		border-right: 1px solid #7390bf;
		background: linear-gradient(#dbe8fa, #bad2f3);
		transform: skewX(-38deg);
	}

	.sheet-tabs .active {
		font-weight: bold;
		border-bottom: 1px solid #8fb0e0;
	}

	.sheet-tabs .active::before { background: #fff; }

	.sheet-tabs .new {
		display: flex;
		align-items: center;
		justify-content: center;
		width: 36px;
		padding-left: 4px;
	}

	.hscroll {
		display: flex;
		width: 538px;
	}

	.hscroll .split {
		width: 7px;
		background: linear-gradient(#5b7fb3, #5b7fb3) center / 1px 60% no-repeat #f4f8fd;
	}

	.hscroll button {
		display: flex;
		align-items: center;
		justify-content: center;
		width: 18px;
	}

	.hthumb {
		display: flex;
		align-items: center;
		justify-content: center;
		flex: 420;
		border: 1px solid #4a5f85;
		background: linear-gradient(#eef2f7, #d5dde8 45%, #aebdd2 55%, #cdd7e4);
	}

	.hthumb .grip {
		width: 8px;
		height: 7px;
		background: repeating-linear-gradient(90deg, #6c7a90 0 1px, transparent 1px 2px);
	}

	.htrack { flex: 68; }

	/* status bar */
	.status {
		display: flex;
		height: 21px;
		flex-shrink: 0;
		border-bottom: 1px solid #44566e;
		background: linear-gradient(#dae9fc, #c2d9f7 35%, #adcbf1 40%, #d6e5fa);
	}

	.mode {
		width: 61px;
		padding-left: 7px;
		border-right: 1px solid #8aaedf;
		line-height: 20px;
	}

	.view {
		display: flex;
		align-items: center;
		width: 245px;
		margin-left: auto;
		padding: 0 5px;
		border-left: 1px solid #fff;
		background: linear-gradient(#b3cdf3, #86aae3 45%, #7197d6 50%, #8fb0e6);
	}

	.view-buttons {
		display: flex;
		border: 1px solid #6882aa;
		border-radius: 2px;
	}

	.view-buttons button {
		display: flex;
		align-items: center;
		justify-content: center;
		width: 18px;
		height: 16px;
		background: #dcdfe3;
	}

	.view-buttons .on { background: #bfc3c8; }

	.percent {
		width: 45px;
		padding-left: 8px;
		color: #6f7580;
	}

	.round { width: 16px; }

	input[type='range'] {
		flex: 1;
		min-width: 0;
		height: 8px;
		appearance: none;
		background: linear-gradient(#dde8f8, #dde8f8) center / 100% 1px no-repeat;
	}

	input[type='range']::-webkit-slider-thumb {
		appearance: none;
		width: 1px;
		height: 8px;
		background: #dde8f8;
	}

	/* taskbar */
	.taskbar {
		display: flex;
		align-items: stretch;
		gap: 3px;
		height: 40px;
		flex-shrink: 0;
		background: linear-gradient(90deg, #8a9fb7 0, #8a9fb7 50px, #aecae6 130px, #b1d0ec calc(100% - 320px), #8aa0b8 calc(100% - 280px));
		border-top: 1px solid #d7e6f3;
	}

	.start {
		width: 57px;
		padding-left: 8px;
	}

	.task {
		display: flex;
		align-items: center;
		justify-content: center;
		width: 59px;
		border: 1px solid #4c5b6d;
		border-radius: 3px;
		box-shadow: inset 0 0 0 1px #dcebf8;
		background: linear-gradient(135deg, #d5e4f3, #afc8e2 50%, #a3c0dd);
	}

	.task.lit { background: linear-gradient(135deg, #f3f8fc, #cfdfee); }

	.tray {
		display: flex;
		align-items: center;
		gap: 8px;
		margin-left: auto;
		color: #fff;
	}

	.lang {
		width: 24px;
		padding-bottom: 6px;
	}

	.help { margin-right: 5px; }
	.arrow { margin-right: 4px; }

	.clock {
		position: relative;
		display: flex;
		flex-direction: column;
		width: 74px;
		text-align: center;
		line-height: 17px;
	}

	.clock time { position: relative; }

	.watermark {
		position: absolute;
		top: 5px;
		right: 0;
		font: bold 17px/24px 'Noto Sans', sans-serif;
		white-space: nowrap;
		color: rgba(215, 222, 230, 0.5);
		text-shadow: 1px 1px 1px rgba(70, 80, 95, 0.3);
	}

	.peek {
		width: 14px;
		border: 1px solid #5f7085;
		background: linear-gradient(#c3ceda, #8497ad);
	}

	/* red marks over the window */
	.mark {
		position: absolute;
		border: 5px solid var(--red);
	}

	.mark-formula { top: 125px; left: 235px; width: 245px; height: 43px; }
	.mark-range { top: 175px; left: 463px; width: 81px; height: 419px; }
	.mark-cell { top: 231px; left: 651px; width: 267px; height: 79px; }

	.num {
		position: absolute;
		font: 31px/32px Lato, sans-serif;
		color: var(--red);
	}

	.num-formula { top: 106px; left: 487px; }
	.num-range { top: 256px; left: 551px; }
	.num-cell { top: 246px; left: 935px; }
</style>
